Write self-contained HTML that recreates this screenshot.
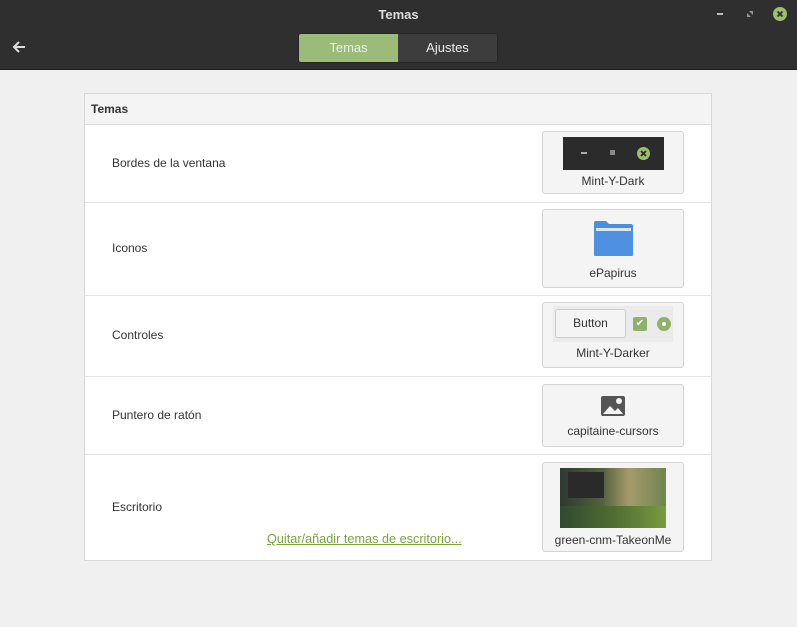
<!DOCTYPE html>
<html><head><meta charset="utf-8"><style>
*{box-sizing:border-box;margin:0;padding:0}
body{width:797px;height:627px;background:#f0f0f0;font-family:"Liberation Sans","DejaVu Sans",sans-serif;font-size:12px;color:#333;position:relative;overflow:hidden}
.hdr{position:absolute;left:0;top:0;width:797px;height:70px;background:#2f2f2f;border-bottom:1px solid #1e1e1e}
.title{position:absolute;top:7px;left:0;width:797px;text-align:center;color:#ddd;font-weight:bold;font-size:13px}
.sw{position:absolute;top:33px;left:298px;width:200px;height:30px;border-radius:3px;overflow:hidden;display:flex;border:1px solid #252525}
.sw div{flex:1;text-align:center;line-height:28px;font-size:13px;color:#eee}
.panel{position:absolute;left:84px;top:93px;width:628px;height:468px;background:#fff;border:1px solid #d8d8d8}
.ph{height:31px;background:#f4f4f4;border-bottom:1px solid #dcdcdc;font-weight:bold;padding:8px 6px;font-size:12px}
.row{position:absolute;left:0;width:626px;border-bottom:1px solid #e4e4e4}
.lbl{position:absolute;left:27px;font-size:12px;color:#333}
.box{position:absolute;left:457px;width:142px;background:#f4f4f4;border:1px solid #d4d4d4;border-radius:3px;text-align:center;font-size:12px;color:#333}
</style></head><body>
<div class="hdr">
<div class="title">Temas</div>
<svg style="position:absolute;left:11px;top:40px" width="16" height="14"><path d="M14 7H3M8 2L3 7l5 5" stroke="#ddd" stroke-width="2" fill="none"/></svg>
<div style="position:absolute;left:717px;top:13px;width:6px;height:2px;background:#bbb"></div>
<svg style="position:absolute;left:746px;top:10px" width="8" height="8"><path d="M1 3v4h4z M3 1h4v4z" fill="#999"/></svg>
<svg style="position:absolute;left:772px;top:6px" width="16" height="16"><circle cx="8" cy="8" r="7" fill="#9bbf6e"/><path d="M5.5 5.5l5 5M10.5 5.5l-5 5" stroke="#2f2f2f" stroke-width="1.8"/></svg>
<div class="sw"><div style="background:#9bbb78">Temas</div><div style="background:#3d3d3d">Ajustes</div></div>
</div>
<div class="panel">
<div class="ph">Temas</div>
<div class="row" style="top:31px;height:78px"><div class="lbl" style="top:31px">Bordes de la ventana</div>
<div class="box" style="top:6px;height:63px"><div style="margin:5px auto 0;width:101px;height:33px;background:#2b2b2b;position:relative">
<div style="position:absolute;left:18px;top:15px;width:6px;height:2px;background:#aaa"></div>
<div style="position:absolute;left:47px;top:13px;width:5px;height:5px;background:#888"></div>
<svg style="position:absolute;left:73px;top:9px" width="15" height="15"><circle cx="7.5" cy="7.5" r="6.5" fill="#9bbf6e"/><path d="M5 5l5 5M10 5l-5 5" stroke="#2b2b2b" stroke-width="1.8"/></svg></div>
<div style="margin-top:4px">Mint-Y-Dark</div></div></div>
<div class="row" style="top:109px;height:93px"><div class="lbl" style="top:38px">Iconos</div>
<div class="box" style="top:6px;height:79px">
<svg style="display:block;margin:10px auto 0" width="41" height="37"><path d="M1 3q0-2 2-2h10l3 3h22q2 0 2 2v28q0 2-2 2H3q-2 0-2-2z" fill="#4a8ee0"/><rect x="3" y="8" width="35" height="3" fill="#dde6f0"/><rect x="1" y="11" width="39" height="25" rx="1" fill="#4e90e2"/></svg>
<div style="margin-top:9px">ePapirus</div></div></div>
<div class="row" style="top:202px;height:81px"><div class="lbl" style="top:32px">Controles</div>
<div class="box" style="top:6px;height:66px"><div style="margin:3px auto 0;width:120px;height:36px;background:#ebebeb;position:relative">
<div style="position:absolute;left:2px;top:3px;width:71px;height:29px;background:#f4f4f4;border:1px solid #ccc;border-radius:3px;line-height:27px;font-size:12px">Button</div>
<div style="position:absolute;left:80px;top:11px;width:14px;height:14px;background:#8fb26a;border-radius:2px;color:#fff;font-size:10px;line-height:14px">✔</div>
<div style="position:absolute;left:104px;top:11px;width:14px;height:14px;background:#8fb26a;border-radius:50%"><div style="margin:5px;width:4px;height:4px;background:#fff;border-radius:50%"></div></div></div>
<div style="margin-top:4px">Mint-Y-Darker</div></div></div>
<div class="row" style="top:283px;height:78px"><div class="lbl" style="top:31px">Puntero de ratón</div>
<div class="box" style="top:7px;height:63px">
<svg style="display:block;margin:11px auto 0" width="24" height="20"><rect x="0" y="0" width="24" height="20" rx="2" fill="#555"/><path d="M2 18l7-8 5 5 3-3 5 6z" fill="#f4f4f4"/><circle cx="18" cy="5" r="3" fill="#f4f4f4"/></svg>
<div style="margin-top:8px">capitaine-cursors</div></div></div>
<div class="row" style="top:361px;height:106px;border-bottom:none"><div class="lbl" style="top:45px">Escritorio</div>
<div style="position:absolute;left:182px;top:77px;color:#7aa53c;text-decoration:underline;font-size:12.7px">Quitar/añadir temas de escritorio...</div>
<div class="box" style="top:7px;height:90px">
<div style="margin:5px auto 0;width:106px;height:60px;background:linear-gradient(90deg,#2d3a30 0%,#55603f 40%,#a69a6b 65%,#6f8550 100%);position:relative">
<div style="position:absolute;left:8px;top:4px;width:36px;height:26px;background:#2a2a2a"></div>
<div style="position:absolute;left:0;bottom:0;width:106px;height:22px;background:linear-gradient(90deg,#2f4a30,#4f6d33,#7a9a40)"></div></div>
<div style="margin-top:5px">green-cnm-TakeonMe</div></div></div>
</div>
</body></html>
